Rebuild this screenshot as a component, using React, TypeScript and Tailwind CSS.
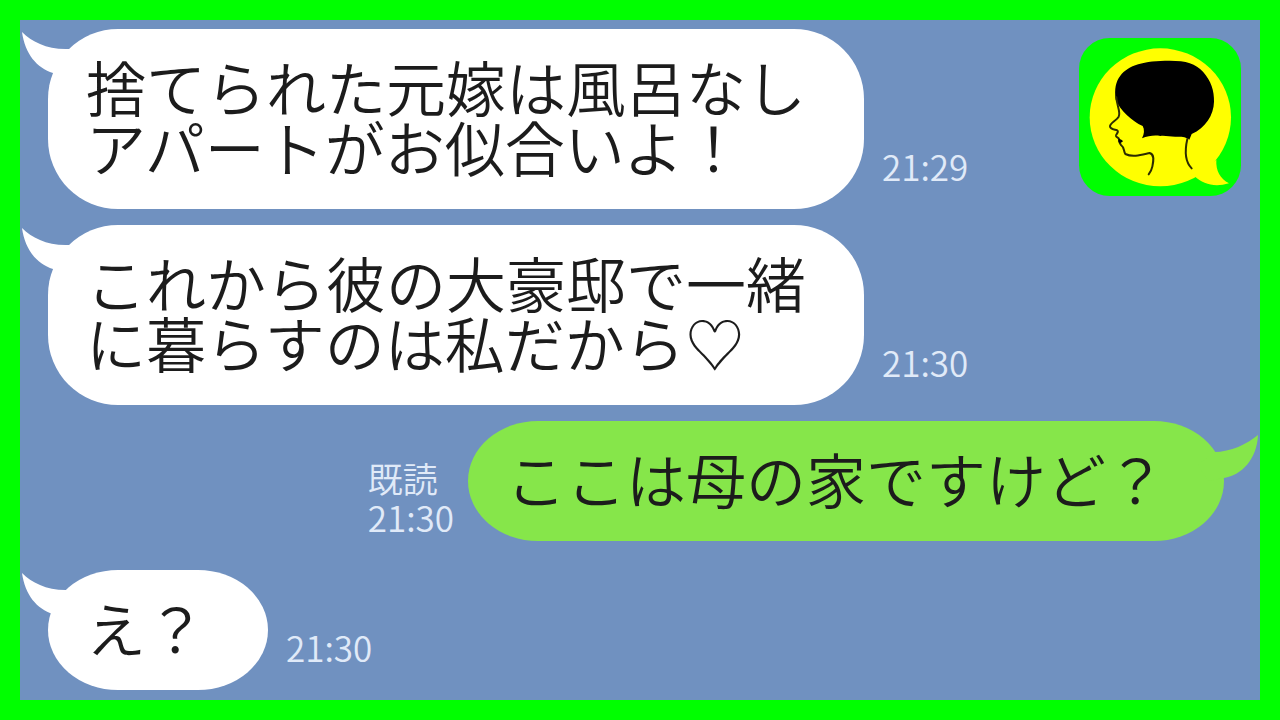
interface Message {
  id: number;
  text: string;
  time: string;
  mine?: boolean;
}

const messages: Message[] = [
  { id: 1, text: "捨てられた元嫁は風呂なし\nアパートがお似合いよ！", time: "21:29" },
  { id: 2, text: "これから彼の大豪邸で一緒\nに暮らすのは私だから♡", time: "21:30" },
  { id: 3, text: "ここは母の家ですけど？", time: "21:30", mine: true },
  { id: 4, text: "え？", time: "21:30" },
];

const IncomingTail = () => (
  <svg className="absolute top-[3px] -left-[26px]" width="60" height="46" viewBox="0 0 60 46" aria-hidden="true">
    <path d="M0 0 C10 10 26 18 47 17 L60 30 L50 46 L31 41 C15 36 3 22 0 0 Z" fill="#ffffff" />
  </svg>
);

const OutgoingTail = () => (
  <svg className="absolute top-[14px] -right-[34px]" width="60" height="46" viewBox="0 0 60 46" aria-hidden="true">
    <path d="M60 0 C49 9 33 17 16 17 L0 30 L10 46 L26 43 C44 40 59 24 60 0 Z" fill="#86e64a" />
  </svg>
);

// Speech balloon logo with the profile of a woman
const Logo = () => (
  <svg
    className="absolute top-[18px] right-[19px]"
    width="162"
    height="158"
    viewBox="28 37 486 474"
    role="img"
    aria-label="Logo"
  >
    <rect x="28" y="37" width="486" height="474" rx="92" fill="#00ff00" />
    <ellipse cx="272" cy="275" rx="212" ry="207" fill="#ffff00" />
    <path d="M375 452 C400 476 436 486 478 473 C452 458 438 436 440 402 Z" fill="#ffff00" />
    <path
      d="M138 222 C134 190 138 168 152 150 C176 118 222 105 300 105 C350 105 378 114 400 138 C424 165 434 195 433 228 C432 268 408 306 366 325 L359 342 C350 334 340 333 325 333 C305 335 290 329 272 331 C256 328 236 330 217 338 C224 325 225 312 219 301 C186 286 152 254 138 222 Z"
      fill="#000000"
    />
    <g fill="none" stroke="#2b2b00" strokeWidth="6" strokeLinecap="round" strokeLinejoin="round">
      <path d="M140 215 C141 240 154 258 147 273 C140 285 121 292 121 302 C121 311 133 311 143 314 C149 320 138 325 139 331 C141 337 149 336 148 342 C145 348 151 352 154 358 C165 366 161 376 167 385 C190 396 217 387 240 382 C256 386 251 408 248 423 C246 433 241 441 237 446" />
      <path d="M353 340 C345 375 346 408 366 428" />
    </g>
    <path d="M145 339 C152 340 157 342 160 347 C157 350 153 353 149 351 C145 348 149 344 145 339 Z" fill="#000000" />
  </svg>
);

const MessageRow = ({ message }: { message: Message }) => {
  const { text, time, mine } = message;

  return (
    <li className={`flex items-end last:mt-[13px] ${mine ? "flex-row-reverse gap-[14px]" : "gap-[18px]"}`}>
      <div
        className={`relative min-w-[220px] pt-[27px] pr-[58px] pb-[33px] pl-[38px] text-[60px] leading-[60px] whitespace-nowrap text-[#1c1c1c] ${
          mine ? "bg-[#86e64a]" : "bg-white"
        } ${text.includes("\n") ? "rounded-[70px]" : "rounded-[70px/60px]"}`}
      >
        {mine ? <OutgoingTail /> : <IncomingTail />}
        <p className="whitespace-pre">{text}</p>
      </div>
      <div className={`text-[35px] leading-[39px] text-[#e0eaf8] ${mine ? "mb-[5px]" : "mb-6"}`}>
        {mine && <p>既読</p>}
        <time>{time}</time>
      </div>
    </li>
  );
};

const App = () => {
  return (
    <main className="min-h-screen bg-[#00ff00] p-5 font-['Noto_Sans_CJK_JP',sans-serif] font-[350] flex" lang="ja">
      <section className="relative flex-1 bg-[#7091c0]">
        <Logo />
        <ul className="flex flex-col gap-4 pt-[9px] pr-9 pb-[9px] pl-7">
          {messages.map((message) => (
            <MessageRow key={message.id} message={message} />
          ))}
        </ul>
      </section>
    </main>
  );
};

export default App;
